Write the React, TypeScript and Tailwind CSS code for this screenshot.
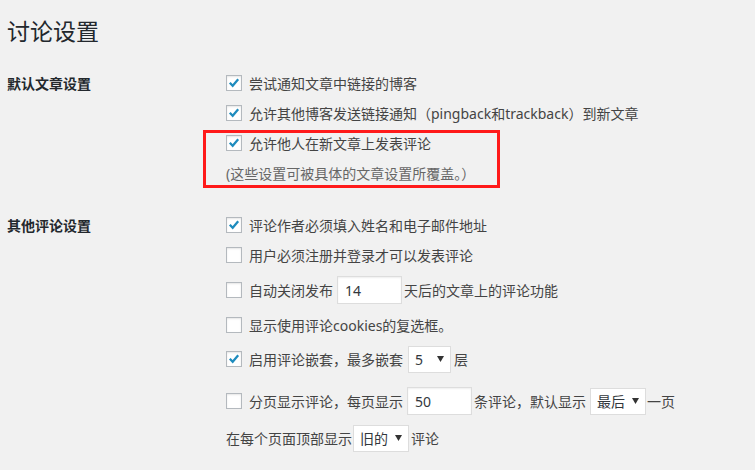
import { ReactNode } from 'react'

function Checkbox({ checked }: { checked?: boolean }) {
  return (
    <span className="flex h-4 w-4 shrink-0 items-center justify-center border border-[#b4b9be] bg-white shadow-[inset_0_1px_2px_rgba(0,0,0,0.1)]">
      {checked && (
        <svg viewBox="0 0 16 16" className="h-4 w-4">
          <path d="M3.2 7.8 L6.5 11.2 L12.8 3.8" fill="none" stroke="#1e8cbe" strokeWidth="2.6" />
        </svg>
      )}
    </span>
  )
}

function TextInput({ value, w }: { value: string; w: string }) {
  return (
    <span className={`mx-[4px] flex h-[28px] items-center border border-[#ddd] bg-white px-[7px] text-[#32373c] shadow-[inset_0_1px_2px_rgba(0,0,0,0.07)] ${w}`}>
      {value}
    </span>
  )
}

function Select({ value, w, m = 'mx-[4px]' }: { value: string; w: string; m?: string }) {
  return (
    <span className={`flex h-[27px] items-center justify-between border border-[#ddd] bg-white pl-[6px] pr-[6px] text-[#32373c] ${m} ${w}`}>
      <span>{value}</span>
      <svg viewBox="0 0 7 6" className="h-[6px] w-[7px]">
        <path d="M0 0 H7 L3.5 6 Z" fill="#333" />
      </svg>
    </span>
  )
}

function Row({ h, checked, box = true, children }: { h: string; checked?: boolean; box?: boolean; children: ReactNode }) {
  return (
    <div className={`flex items-center ${h}`}>
      {box && (
        <span className="mr-[7px]">
          <Checkbox checked={checked} />
        </span>
      )}
      {children}
    </div>
  )
}

export default function App() {
  return (
    <div
      className="min-h-[470px] w-[755px] bg-[#f1f1f1] pl-[7px] text-[14px] text-[#444]"
      style={{ fontFamily: '"Noto Sans", "Noto Sans CJK SC", sans-serif' }}
    >
      {/* Title */}
      <h1 className="pt-[16px] text-[23px] leading-[30px] text-[#23282d]">讨论设置</h1>

      {/* 默认文章设置 */}
      <div className="mt-[22px] flex">
        <div className="flex h-[30px] w-[219px] shrink-0 items-center font-semibold text-[#23282d]">默认文章设置</div>
        <div className="relative">
          <Row h="h-[30px]" checked>尝试通知文章中链接的博客</Row>
          <Row h="h-[30px]" checked>
            允许其他博客发送链接通知（pingback和trackback）到新文章
          </Row>
          <Row h="h-[30px]" checked>允许他人在新文章上发表评论</Row>
          <Row h="h-[30px]" box={false}>
            <span className="text-[#666]">(这些设置可被具体的文章设置所覆盖。）</span>
          </Row>
          <div className="pointer-events-none absolute left-[-23px] top-[62px] h-[58px] w-[297px] border-[3px] border-[#ff1a1a]" />
        </div>
      </div>

      {/* 其他评论设置 */}
      <div className="mt-[22px] flex">
        <div className="flex h-[30px] w-[219px] shrink-0 items-center font-semibold text-[#23282d]">其他评论设置</div>
        <div>
          <Row h="h-[30px]" checked>评论作者必须填入姓名和电子邮件地址</Row>
          <Row h="h-[30px]">用户必须注册并登录才可以发表评论</Row>
          <Row h="h-[40px]">
            自动关闭发布
            <TextInput value="14" w="w-[65px]" />
            <span className="-ml-[2px]">天后的文章上的评论功能</span>
          </Row>
          <Row h="h-[30px]">显示使用评论cookies的复选框。</Row>
          <Row h="h-[38px]" checked>
            启用评论嵌套，最多嵌套
            <Select value="5" w="w-[43px]" m="ml-[5px] mr-[3px]" />
            <span>层</span>
          </Row>
          <Row h="h-[46px]">
            分页显示评论，每页显示
            <TextInput value="50" w="w-[65px]" />
            <span className="-ml-[2px]">条评论，默认显示</span>
            <Select value="最后" w="w-[56px]" m="ml-[4px] mr-[1px]" />
            <span>一页</span>
          </Row>
          <Row h="h-[28px]" box={false}>
            在每个页面顶部显示
            <Select value="旧的" w="w-[56px]" m="ml-[1px] mr-[2px]" />
            <span>评论</span>
          </Row>
        </div>
      </div>
    </div>
  )
}
